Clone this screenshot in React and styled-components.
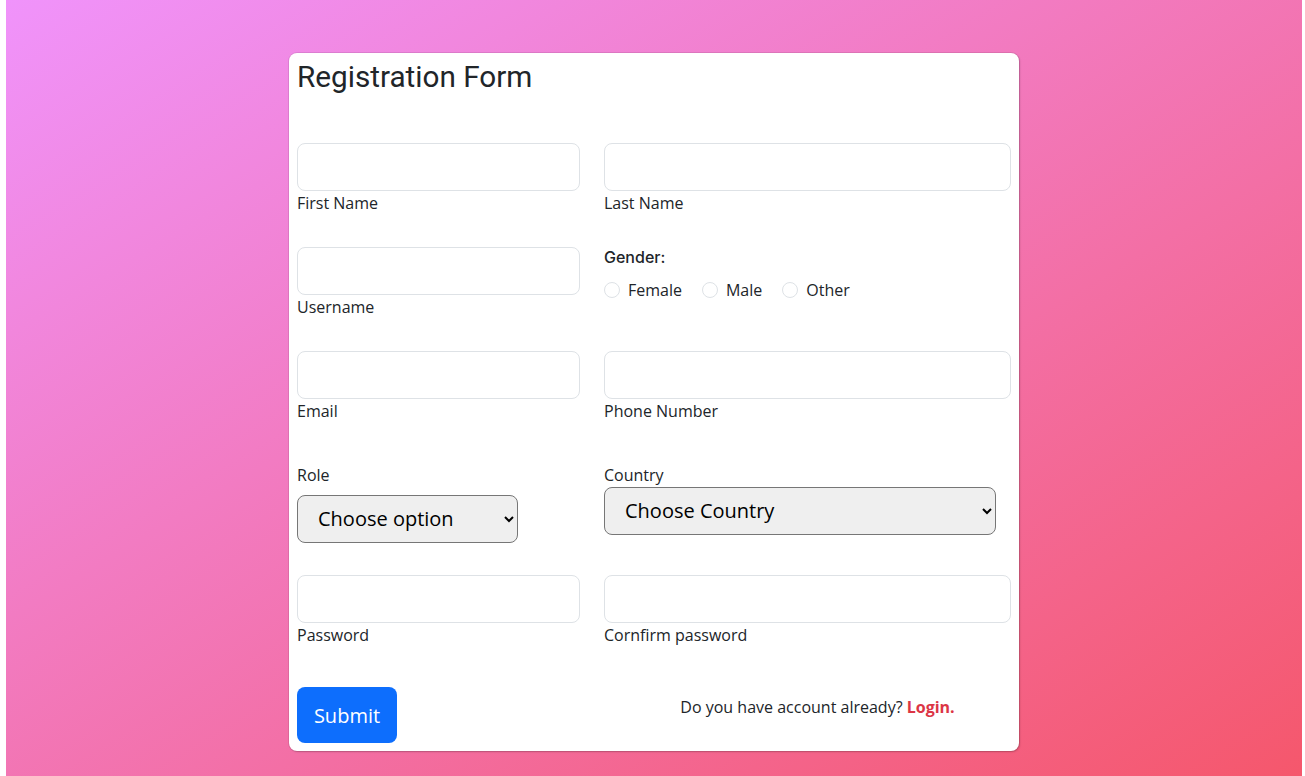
import React from 'react';
import styled, { createGlobalStyle } from 'styled-components';

const GlobalStyle = createGlobalStyle`
    * { box-sizing: border-box; }
    body {
        margin: 0;
        font-family: "Open Sans", "Liberation Sans", sans-serif;
        color: #212529;
        background: #fff;
    }
`;

export default function App() {
    return (
        <>
            <GlobalStyle />
            <SPage>
                <SCard>
                    <STitle>Registration Form</STitle>
                    <SGrid>
                        <SField>
                            <SInput type="text" />
                            <SLabel>First Name</SLabel>
                        </SField>
                        <SField>
                            <SInput type="text" />
                            <SLabel>Last Name</SLabel>
                        </SField>

                        <SField>
                            <SInput type="text" />
                            <SLabel>Username</SLabel>
                        </SField>
                        <SField>
                            <SGenderTitle>Gender:</SGenderTitle>
                            <SRadioRow>
                                <SRadioItem><SRadio type="radio" name="gender" />Female</SRadioItem>
                                <SRadioItem><SRadio type="radio" name="gender" />Male</SRadioItem>
                                <SRadioItem><SRadio type="radio" name="gender" />Other</SRadioItem>
                            </SRadioRow>
                        </SField>

                        <SField>
                            <SInput type="email" />
                            <SLabel>Email</SLabel>
                        </SField>
                        <SField>
                            <SInput type="tel" />
                            <SLabel>Phone Number</SLabel>
                        </SField>

                        <SField>
                            <STopLabel>Role</STopLabel>
                            <SSelect $width={221} $offset={8} defaultValue="">
                                <option value="">Choose option</option>
                            </SSelect>
                        </SField>
                        <SField>
                            <STopLabel>Country</STopLabel>
                            <SSelect $width={392} $offset={0} defaultValue="">
                                <option value="">Choose Country</option>
                            </SSelect>
                        </SField>

                        <SField>
                            <SInput type="password" />
                            <SLabel>Password</SLabel>
                        </SField>
                        <SField>
                            <SInput type="password" />
                            <SLabel>Cornfirm password</SLabel>
                        </SField>
                    </SGrid>
                    <SFooter>
                        <SSubmit type="button">Submit</SSubmit>
                        <SAccount>
                            Do you have account already? <SLogin href="#">Login.</SLogin>
                        </SAccount>
                    </SFooter>
                </SCard>
            </SPage>
        </>
    );
}

const SPage = styled.div`
    margin: 0 3px 0 6px;
    height: 776px;
    background: linear-gradient(to bottom right, #f093fb, #f5576c);
    display: flex;
    justify-content: center;
    padding-top: 53px;
`;

const SCard = styled.div`
    width: 730px;
    height: 698px;
    background: #fff;
    border-radius: 8px;
    box-shadow: 0 0 0 1px rgba(0, 0, 0, 0.08), 1px 1px 2px rgba(0, 0, 0, 0.18);
    padding: 8px;
`;

const STitle = styled.h1`
    margin: 0;
    font-family: Roboto, "Liberation Sans", sans-serif;
    font-weight: 400;
    font-size: 29.7px;
    line-height: 32px;
    color: #212529;
`;

const SGrid = styled.div`
    display: grid;
    grid-template-columns: 283px 407px;
    grid-template-rows: 104px 104px 104px 120px auto;
    column-gap: 24px;
    margin-top: 50px;
`;

const SField = styled.div`
    display: flex;
    flex-direction: column;
    align-items: flex-start;
`;

const SInput = styled.input`
    width: 100%;
    height: 48px;
    border: 1px solid #dee2e6;
    border-radius: 8px;
    background: #fff;
    outline: none;
    font-size: 16px;
`;

const SLabel = styled.label`
    font-size: 16px;
    line-height: 24px;
    color: #212529;
`;

const STopLabel = styled.label`
    font-size: 16px;
    line-height: 24px;
    margin-top: 8px;
    color: #212529;
`;

const SGenderTitle = styled.div`
    font-family: Inter, Roboto, "Liberation Sans", sans-serif;
    font-weight: 500;
    font-size: 16px;
    line-height: 20px;
    color: #212529;
`;

const SRadioRow = styled.div`
    display: flex;
    gap: 20px;
    margin-top: 13px;
`;

const SRadioItem = styled.label`
    display: flex;
    align-items: center;
    gap: 8px;
    font-size: 16px;
    line-height: 20px;
    color: #212529;
`;

const SRadio = styled.input`
    appearance: none;
    margin: 0;
    width: 16px;
    height: 16px;
    border: 1px solid #dee2e6;
    border-radius: 50%;
    background: #fff;
`;

const SSelect = styled.select`
    width: ${(p) => p.$width}px;
    height: 48px;
    margin-top: ${(p) => p.$offset}px;
    padding: 0 4px 2px 16px;
    border: 1px solid #767676;
    border-radius: 8px;
    background: #efefef;
    color: #000;
    font-family: "Open Sans", "Liberation Sans", sans-serif;
    font-size: 20px;
`;

const SFooter = styled.div`
    display: grid;
    grid-template-columns: 283px 407px;
    column-gap: 24px;
    align-items: center;
    margin-top: 40px;
`;

const SSubmit = styled.button`
    width: 100px;
    height: 56px;
    border: none;
    border-radius: 8px;
    background: #0d6efd;
    color: #fff;
    font-family: "Open Sans", "Liberation Sans", sans-serif;
    font-size: 20px;
    cursor: pointer;
`;

const SAccount = styled.p`
    margin: 0 0 17px 20px;
    text-align: center;
    font-size: 16px;
    color: #212529;
`;

const SLogin = styled.a`
    color: #dc3545;
    font-weight: 700;
    text-decoration: none;
`;
